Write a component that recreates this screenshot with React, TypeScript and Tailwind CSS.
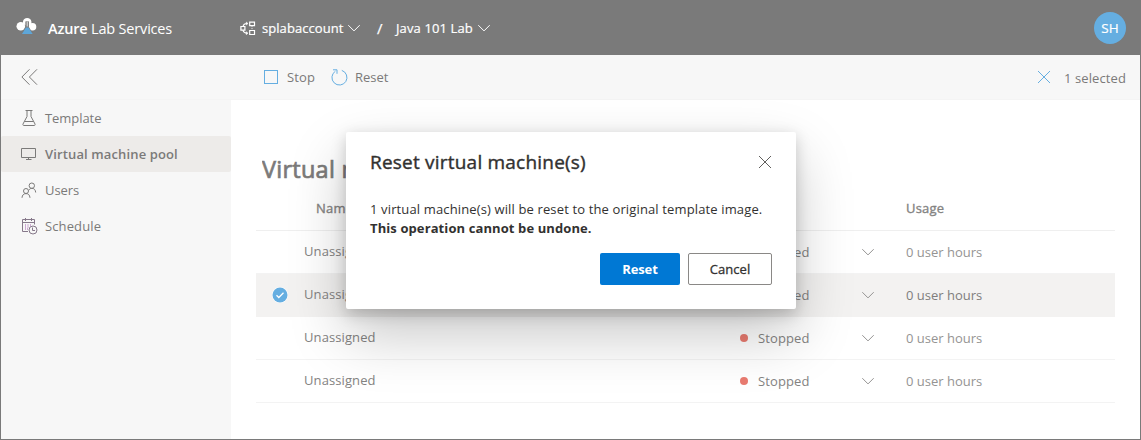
import React from "react";

function ChevronDown({ className }: { className: string }) {
  return (
    <svg className={className} width="14" height="14" viewBox="0 0 14 14" fill="none" stroke="currentColor">
      <path d="M1.300 4.200 7 9.900l5.700-5.700" />
    </svg>
  );
}

function Cross({ className }: { className: string }) {
  return (
    <svg className={className} width="14" height="14" viewBox="0 0 14 14" fill="none" stroke="currentColor">
      <path d="M1 1l12 12M13 1 1 13" />
    </svg>
  );
}

function AzureLabLogo() {
  return (
    <svg className="-mt-1 shrink-0" width="22" height="18" viewBox="0 0 22 18">
      <circle cx="4.800" cy="9.300" r="4.300" fill="#fff" />
      <circle cx="16.500" cy="9.800" r="3.800" fill="#fff" />
      <path d="M7 7V4.500C7.200 2.300 9 1 11.200 1s4 1.300 4.200 3.500V8h-2.600V4.500H9.600v4z" fill="#fff" />
      <path d="M9.600 4.500h3.100v5l4.300 7.500H6l3.600-7.500z" fill="#7a7a7a" />
      <path d="M11.200 4.500v5" stroke="#e8e8e8" strokeWidth="1" />
      <path d="M9.900 10.500h2.700l4 6.500H6z" fill="#5ea6d8" />
    </svg>
  );
}

function AccountIcon() {
  return (
    <svg className="shrink-0" width="16" height="15" viewBox="0 0 16 15" fill="none" stroke="#fff" strokeWidth="1.200">
      <path d="M.9 5.500h4v3.700h-4zM9.700 1.200h4.800v3.500H9.700zM9.700 9.500h4.800v4H9.700z" />
      <path d="M3 5.500c.4-2.200 2-3 4.200-3M3 9.200c.4 2.200 2 3 4.200 3" />
      <path d="M6.300 1v3l1.700-1.500zM6.300 10.700v3L8 12.200z" fill="#fff" strokeWidth=".5" />
      <path d="M12 4.700v4.800" strokeWidth=".8" strokeDasharray="1.200 1" />
    </svg>
  );
}

function TemplateIcon() {
  return (
    <svg width="16" height="18" viewBox="0 0 16 18" fill="none" stroke="currentColor">
      <path d="M4.500 1.500h7M6 1.500v6L2 15c-.3.900 0 1.500.8 1.500h10.400c.8 0 1.100-.6.800-1.500l-4-7.500v-6M3.500 12.500h9" />
    </svg>
  );
}

function MonitorIcon() {
  return (
    <svg width="16" height="14" viewBox="0 0 16 14" fill="none" stroke="currentColor">
      <path d="M.5 1.500h14v9H.5zM5 12.500h5.500M7.500 10.500v2" />
    </svg>
  );
}

function UsersIcon() {
  return (
    <svg width="16" height="17" viewBox="0 0 16 17" fill="none" stroke="currentColor">
      <circle cx="5" cy="9" r="2.500" />
      <circle cx="10.800" cy="3.700" r="2.700" />
      <path d="M1 15.800c.2-2.700 1.600-4.200 4-4.200s3.700 1.300 4 4.200M7.800 8.300c.8-1.300 1.700-2 3-2 2.300 0 3.700 1.500 3.900 4.200" />
    </svg>
  );
}

function ScheduleIcon() {
  return (
    <svg width="17" height="17" viewBox="0 0 17 17" fill="none" stroke="#86788a">
      <path d="M7 13.500H1.500v-12h12v5M1.500 4.500h12M4.500 0v3M10.500 0v3" />
      <path d="M4 7h1m1.500 0h1m1.500 0h1M4 9h1m1.500 0h1M4 11h1m1 0h1" stroke="#a55bb0" />
      <circle cx="12" cy="12" r="4" fill="#f7f7f7" />
      <path d="M11.500 9.500v3h2.500" />
    </svg>
  );
}

const navItems = [
  { label: "Template", icon: <TemplateIcon />, style: "mt-[2px] tracking-[-0.06px]", active: false },
  { label: "Virtual machine pool", icon: <MonitorIcon />, style: "mt-[2px] font-semibold tracking-[0.13px]", active: true },
  { label: "Users", icon: <UsersIcon />, style: "mt-[2px] tracking-[-0.1px]", active: false },
  { label: "Schedule", icon: <ScheduleIcon />, style: "mt-[2px] tracking-[0.12px]", active: false },
];

const machines = [
  { name: "Unassigned", state: "Stopped", usage: "0 user hours", selected: false },
  { name: "Unassigned", state: "Stopped", usage: "0 user hours", selected: true },
  { name: "Unassigned", state: "Stopped", usage: "0 user hours", selected: false },
  { name: "Unassigned", state: "Stopped", usage: "0 user hours", selected: false },
];

function Header() {
  return (
    <header className="flex h-[54px] shrink-0 items-center bg-[#7a7a7a] pr-[14px] pl-[15px] text-[14px] text-white">
      <AzureLabLogo />
      <div className="ml-[10px] w-[192px] pt-px text-[14.5px] tracking-[-0.18px] whitespace-nowrap">
        <span className="font-semibold">Azure</span> Lab Services
      </div>
      <AccountIcon />
      <span className="ml-[6px] w-[83px] pt-[2px] text-[13px] tracking-[0.06px] whitespace-nowrap [-webkit-text-stroke:0.2px]">splabaccount</span>
      <ChevronDown className="ml-[2px]" />
      <span className="ml-[16px] w-[19px] pt-px text-[15px] [-webkit-text-stroke:0.25px]">/</span>
      <span className="w-[79px] pt-[2px] text-[13px] tracking-[0.12px] whitespace-nowrap [-webkit-text-stroke:0.2px]">Java 101 Lab</span>
      <ChevronDown className="ml-[2px]" />
      <div className="ml-auto flex size-8 items-center justify-center rounded-full bg-[#65aee1] text-[13.5px] [-webkit-text-stroke:0.2px]">SH</div>
    </header>
  );
}

function CommandBar() {
  return (
    <div className="flex h-[45px] shrink-0 items-center border-b border-[#f4f4f4] bg-[#f7f7f7] pr-[14px] pl-[20px] text-[13px] text-[#7b7a79]">
      <svg width="17" height="16" viewBox="0 0 17 16" fill="none" stroke="currentColor">
        <path d="M8.500.300.900 8l7.600 7.700M16 .300 8.400 8l7.600 7.700" />
      </svg>
      <span className="ml-[226px] size-[14px] border border-[#65aee1]" />
      <span className="mt-[2px] ml-[9px] w-[44px] tracking-[0.1px]">Stop</span>
      <svg width="17" height="17" viewBox="0 0 17 17" fill="none" stroke="#65aee1">
        <path d="M10.800 1.400a7.500 7.500 0 1 1-6.400.8M2 .800h4v4" />
      </svg>
      <span className="mt-[2px] ml-[7px]">Reset</span>
      <Cross className="ml-auto text-[#65aee1]" />
      <span className="mt-[3px] ml-[13px] tracking-[0.1px]">1 selected</span>
    </div>
  );
}

function Dialog() {
  return (
    <div className="absolute top-[131px] left-[345px] flex h-[177px] w-[450px] flex-col rounded-[2px] bg-white px-6 pb-6 text-[#323130] shadow-[0_25.6px_57.6px_rgba(0,0,0,0.22),0_4.8px_14.4px_rgba(0,0,0,0.18)]">
      <div className="flex h-[68px] items-start justify-between">
        <h2 className="pt-[17px] text-[19px] leading-[27px] tracking-[0.21px] whitespace-nowrap [-webkit-text-stroke:0.4px]">Reset virtual machine(s)</h2>
        <Cross className="mt-[23px] text-[#605e5c]" />
      </div>
      <p className="text-[13px] leading-[19px] tracking-[0.135px] whitespace-nowrap">
        1 virtual machine(s) will be reset to the original template image.
        <br />
        <strong className="font-bold tracking-[0.1px]">This operation cannot be undone.</strong>
      </p>
      <div className="mt-auto flex justify-end gap-2 text-[13px]">
        <button className="h-8 w-20 rounded-[2px] bg-[#0078d4] pt-px font-bold tracking-[-0.15px] text-white">Reset</button>
        <button className="h-8 w-[84px] rounded-[2px] border border-[#8a8886] pt-px tracking-[0.05px] [-webkit-text-stroke:0.3px]">Cancel</button>
      </div>
    </div>
  );
}

export default function App() {
  return (
    <div className="relative flex h-[440px] w-[1141px] flex-col overflow-hidden border border-[#7a7a7a] bg-white font-['Open_Sans','Noto_Sans',sans-serif]">
      <Header />
      <CommandBar />
      <div className="flex min-h-0 grow">
        <nav className="w-[230px] shrink-0 bg-[#f7f7f7] text-[13px] text-[#7b7a79]">
          {navItems.map((item) => (
            <div key={item.label} className={item.active ? "flex h-9 items-center rounded-[2px] bg-[#edebe9] pl-[20px]" : "flex h-9 items-center pl-[20px]"}>
              <span className="flex w-[24px] items-center">{item.icon}</span>
              <span className={item.style}>{item.label}</span>
            </div>
          ))}
        </nav>
        <main className="flex grow flex-col pr-[25px] pl-[25px] text-[13px] text-[#848382]">
          <h1 className="mt-[52px] ml-[6px] h-[35px] w-[84px] overflow-hidden text-[23.5px] leading-[35px] tracking-[0.25px] whitespace-nowrap text-[#7b7a79] [-webkit-text-stroke:0.7px]">
            Virtual machine pool
          </h1>
          <div className="flex h-[44px] items-center border-b border-[#efefef] pl-[60px] text-[#848382] [-webkit-text-stroke:0.35px]">
            <span className="w-[590px] tracking-[0.2px]">Name</span>
            <span className="tracking-[0.2px]">Usage</span>
          </div>
          {machines.map((vm, i) => (
            <div key={i} className={vm.selected ? "flex h-[43px] items-center border-b border-[#f3f2f1] bg-[#f3f2f1]" : "flex h-[43px] items-center border-b border-[#f3f3f3]"}>
              <span className="flex w-[48px] justify-center">
                {vm.selected && (
                  <svg width="16" height="16" viewBox="0 0 16 16">
                    <circle cx="8" cy="8" r="8" fill="#fff" />
                    <circle cx="8" cy="8" r="7.500" fill="#65aee1" />
                    <path d="m4.500 8.300 2.300 2.200 4.700-4.700" fill="none" stroke="#fff" strokeWidth="1.300" />
                  </svg>
                )}
              </span>
              <span className="w-[436px] tracking-[0.1px]">{vm.name}</span>
              <span className="size-[7.5px] rounded-full bg-[#e97b70]" />
              <span className="mt-[2px] ml-[10.500px] w-[103px] tracking-[0.1px]">{vm.state}</span>
              <ChevronDown className="text-[#959493]" />
              <span className={vm.selected ? "mt-[2px] ml-[31px] text-[#7f7e7d]" : "mt-[2px] ml-[31px] text-[#959493]"}>{vm.usage}</span>
            </div>
          ))}
        </main>
      </div>
      <Dialog />
    </div>
  );
}
